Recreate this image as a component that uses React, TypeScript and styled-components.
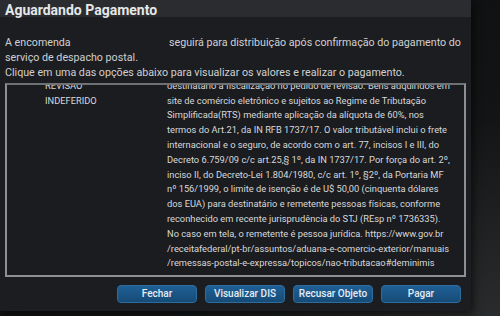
import React, { useLayoutEffect, useRef } from "react";
import styled, { createGlobalStyle } from "styled-components";

const GlobalStyle = createGlobalStyle`
  html, body { margin: 0; padding: 0; background: #0e0f10; }
  body { font-family: Roboto, "Noto Sans", "Liberation Sans", sans-serif; }
  * { box-sizing: border-box; }
`;

const Page = styled.div`
  width: 500px;
  height: 316px;
  overflow: hidden;
  background: radial-gradient(ellipse at 100% 100%, #2a2b2c 0%, #131415 45%, #0d0e0f 100%);
`;

const Dialog = styled.div`
  width: 471px;
  height: 311px;
  background: #1c1d20;
  display: flex;
  flex-direction: column;
  box-shadow: 2px 2px 8px rgba(0, 0, 0, 0.6);
`;

const Header = styled.div`
  height: 17px;
  background: #2a2c30;
  padding: 1px 5px 0;
`;

const Title = styled.h1`
  margin: 0;
  font-size: 14px;
  line-height: 18px;
  font-weight: 700;
  color: #e6e7e8;
  white-space: nowrap;
`;

const Content = styled.div`
  flex: 1;
  display: flex;
  flex-direction: column;
  padding: 18px 5px 0;
`;

const Intro = styled.p`
  margin: 0;
  font-size: 10.7px;
  line-height: 15px;
  color: #cfd0d2;
  width: 462px;
`;

const Hidden = styled.span`
  display: inline-block;
  width: 93px;
`;

const Box = styled.div`
  margin-top: 3px;
  height: 194px;
  width: 461px;
  border: 2px solid #8d9093;
  border-top-color: #6f7275;
  background: #1b1c1f;
  overflow-y: auto;
  scrollbar-width: none;
  &::-webkit-scrollbar { display: none; }
`;

const Row = styled.div`
  display: grid;
  grid-template-columns: 160px 1fr;
  padding: 4px 0;
  font-size: 9.3px;
  line-height: 14.8px;
  color: #d8d9da;
`;

const Status = styled.div`
  padding-left: 38px;
  width: 100px;
`;

const Detail = styled.div``;

const Line = styled.div`
  white-space: nowrap;
`;

const Buttons = styled.div`
  display: flex;
  justify-content: flex-end;
  gap: 8px;
  padding: 8px 5px 0 0;
  width: 461px;
`;

const Button = styled.button`
  width: 80px;
  height: 18px;
  padding: 0;
  border: 1px solid #2d6c9f;
  border-radius: 4px;
  background: linear-gradient(#1f5f95, #174b76);
  color: #e4ecf4;
  font-family: Roboto, "Noto Sans", sans-serif;
  font-size: 10px;
  font-weight: 500;
  line-height: 16px;
`;

const detailLines = [
  "Mantida a tributação do objeto, uma vez que compete ao",
  "destinatário a fiscalização no pedido de revisão. Bens adquiridos em",
  "site de comércio eletrônico e sujeitos ao Regime de Tributação",
  "Simplificada(RTS) mediante aplicação da alíquota de 60%, nos",
  "termos do Art.21, da IN RFB 1737/17. O valor tributável inclui o frete",
  "internacional e o seguro, de acordo com o art. 77, incisos I e III, do",
  "Decreto 6.759/09 c/c art.25,§ 1º, da IN 1737/17. Por força do art. 2º,",
  "inciso II, do Decreto-Lei 1.804/1980, c/c art. 1º, §2º, da Portaria MF",
  "nº 156/1999, o limite de isenção é de U$ 50,00 (cinquenta dólares",
  "dos EUA) para destinatário e remetente pessoas físicas, conforme",
  "reconhecido em recente jurisprudência do STJ (REsp nº 1736335).",
  "No caso em tela, o remetente é pessoa jurídica. https://www.gov.br",
  "/receitafederal/pt-br/assuntos/aduana-e-comercio-exterior/manuais",
  "/remessas-postal-e-expressa/topicos/nao-tributacao#deminimis",
];

export default function App() {
  const boxRef = useRef<HTMLDivElement>(null);
  useLayoutEffect(() => {
    if (boxRef.current) boxRef.current.scrollTop = 26;
  }, []);

  return (
    <>
      <GlobalStyle />
      <Page>
        <Dialog>
          <Header>
            <Title>Aguardando Pagamento</Title>
          </Header>
          <Content>
            <Intro>
              A encomenda <Hidden /> seguirá para distribuição após confirmação do pagamento do
              serviço de despacho postal.
              <br />
              Clique em uma das opções abaixo para visualizar os valores e realizar o pagamento.
            </Intro>
            <Box ref={boxRef}>
              <Row>
                <Status>PEDIDO DE REVISÃO INDEFERIDO</Status>
                <Detail>
                  {detailLines.map((l, i) => (
                    <Line key={i}>{l}</Line>
                  ))}
                </Detail>
              </Row>
            </Box>
            <Buttons>
              <Button>Fechar</Button>
              <Button>Visualizar DIS</Button>
              <Button>Recusar Objeto</Button>
              <Button>Pagar</Button>
            </Buttons>
          </Content>
        </Dialog>
      </Page>
    </>
  );
}
